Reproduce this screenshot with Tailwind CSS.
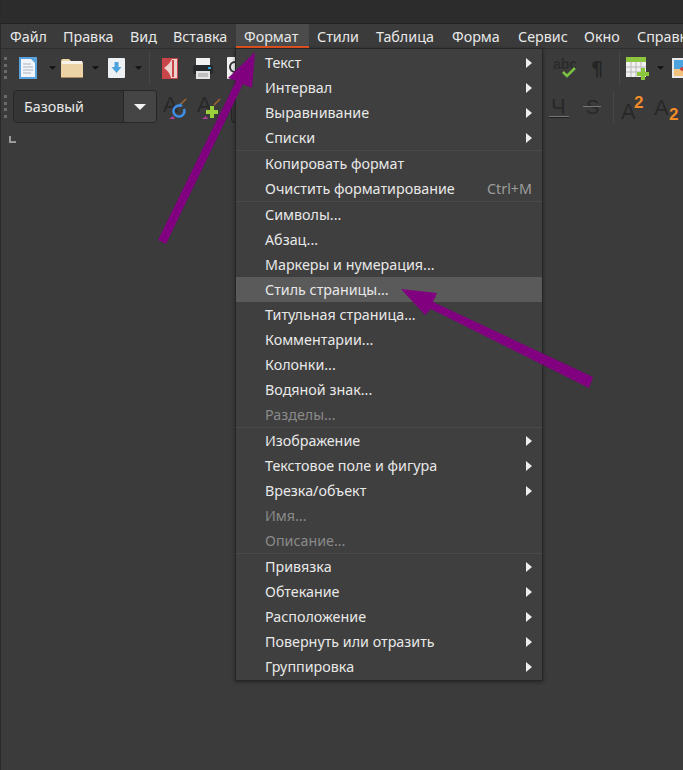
<!DOCTYPE html>
<html lang="ru">
<head>
  <meta charset="UTF-8" />
  <title>Формат</title>
  <script src="https://cdn.jsdelivr.net/npm/@tailwindcss/browser@4"></script>
</head>
<body class="bg-[#3b3b3b] font-['Noto_Sans',sans-serif] text-[14.3px] text-[#e8e8e8]">
<div class="relative w-[683px] h-[770px] overflow-hidden border-l border-[#2a2a2a]">

  <!-- title bar -->
  <div class="h-[23px] bg-[#2c2c2c] border-b border-[#222222] box-content"></div>

  <!-- menu bar -->
  <div class="flex h-[24px] pl-px border-b border-[#2e2e2e] box-content whitespace-nowrap *:shrink-0">
    <div class="w-[53px] pl-2 leading-[25px]">Файл</div>
    <div class="w-[67px] pl-2 leading-[25px]">Правка</div>
    <div class="w-[43px] pl-2 leading-[25px]">Вид</div>
    <div class="w-[71px] pl-2 leading-[25px]">Вставка</div>
    <div class="w-[73px] pl-2 leading-[25px] h-[24px] bg-[#4b4b4b] border-b-2 border-[#e95420]">Формат</div>
    <div class="w-[59px] pl-2 leading-[25px]">Стили</div>
    <div class="w-[76px] pl-2 leading-[25px]">Таблица</div>
    <div class="w-[66px] pl-2 leading-[25px]">Форма</div>
    <div class="w-[66px] pl-2 leading-[25px]">Сервис</div>
    <div class="w-[53px] pl-2 leading-[25px]">Окно</div>
    <div class="w-[60px] pl-2 leading-[25px]">Справка</div>
  </div>

  <!-- toolbar 1 -->
  <div class="flex items-center h-[38px] pl-[3px] *:shrink-0">
    <div class="w-[4px] h-[22px] border-l-[3px] border-dotted border-[#6a6a6a]"></div>
    <svg class="ml-[11px] w-[18px] h-[22px]" viewBox="0 0 18 22"><rect width="18" height="22" fill="#5aa2dc"/><path d="M2 2h10l4 4v14H2z" fill="#f1f5f9"/><path d="M4 7h8M4 10h10M4 13h10M4 16h8" stroke="#a9b4bf"/></svg>
    <svg class="ml-[12px] w-[7px] h-[4px]" viewBox="0 0 8 4"><path d="M0 0h8L4 4z" fill="#111"/></svg>
    <svg class="ml-[5px] w-[22px] h-[19px]" viewBox="0 0 22 19"><path d="M0 2q0-2 2-2h6l2 2h10q2 0 2 2v14q0 1-1 1H1q-1 0-1-1z" fill="#ecd3a5"/><path d="M1 2h20v3H1z" fill="#f7f3ea"/><path d="M0 18.500h22" stroke="#a88d63"/></svg>
    <svg class="ml-[9px] w-[7px] h-[4px]" viewBox="0 0 8 4"><path d="M0 0h8L4 4z" fill="#111"/></svg>
    <svg class="ml-[9px] w-[17px] h-[20px]" viewBox="0 0 17 20"><rect width="17" height="20" rx="1" fill="#eef1f3"/><path d="M6.500 4h4v5h3l-5 6-5-6h3z" fill="#4aa3df"/></svg>
    <svg class="ml-[10px] w-[7px] h-[4px]" viewBox="0 0 8 4"><path d="M0 0h8L4 4z" fill="#111"/></svg>
    <div class="ml-[7px] w-px h-[32px] bg-[#474747]"></div>
    <svg class="ml-[12px] w-[16px] h-[21px]" viewBox="0 0 16 21"><rect width="16" height="21" fill="#c9454a"/><path d="M10 1C8 5 5 8 2 10c3 2 6 5 7 10h6V1z" fill="#ecd2cf"/><path d="M11 2v17" stroke="#c9454a" stroke-width="2"/></svg>
    <svg class="ml-[15px] w-[20px] h-[21px]" viewBox="0 0 20 21"><rect x="3" y="0" width="14" height="7" fill="#f2f2f2"/><rect x="0" y="7" width="20" height="9" rx="2" fill="#26292b"/><rect x="15" y="9" width="3" height="2" fill="#2aa7d8"/><rect x="3" y="13" width="14" height="8" fill="#e4e4e4"/><path d="M5 16h10M5 18h10" stroke="#999"/></svg>
    <svg class="ml-[14px] w-[12px] h-[22px]" viewBox="0 0 12 22"><rect width="12" height="22" rx="1" fill="#f1f1f1"/><circle cx="8" cy="10" r="5" fill="none" stroke="#333" stroke-width="2"/></svg>
    <svg class="ml-[314px] w-[25px] h-[20px] overflow-visible" viewBox="0 0 25 20"><text x="0" y="11" font-family="Liberation Sans" font-size="14" font-weight="bold" fill="#2b2b2b">abc</text><path d="M10 14l4 4 8-8" fill="none" stroke="#7ac143" stroke-width="2.500"/></svg>
    <svg class="ml-[14px] w-[13px] h-[20px] overflow-visible" viewBox="0 0 13 20"><text x="-1" y="17" font-family="DejaVu Sans" font-size="19" font-weight="bold" fill="#262626">¶</text></svg>
    <div class="ml-[14px] w-px h-[32px] bg-[#474747]"></div>
    <svg class="ml-[6px] w-[24px] h-[23px]" viewBox="0 0 24 23"><rect width="20" height="20" fill="#f0f0f0"/><rect width="20" height="5" fill="#8cc63f"/><path d="M0 10h20M0 15h20M5 5v15M10 5v15M15 5v15" stroke="#b8b8b8"/><path d="M15 11h4v4h4v4h-4v4h-4v-4h-4v-4h4z" fill="#8cc63f"/></svg>
    <svg class="ml-[7px] w-[7px] h-[4px]" viewBox="0 0 8 4"><path d="M0 0h8L4 4z" fill="#111"/></svg>
    <svg class="ml-[8px] w-[20px] h-[20px]" viewBox="0 0 20 20"><rect width="20" height="20" fill="#e9e9e9"/><rect x="2" y="2" width="16" height="16" fill="#4aa3df"/><rect x="2" y="11" width="16" height="7" fill="#f1c27d"/><path d="M8 11h4M10 9v4" stroke="#d9332b" stroke-width="1.500"/></svg>
  </div>

  <!-- toolbar 2 -->
  <div class="flex items-center h-[39px] pl-[3px] *:shrink-0">
    <div class="w-[4px] h-[23px] border-l-[3px] border-dotted border-[#6a6a6a]"></div>
    <div class="ml-[5px] flex w-[144px] h-[33px] border border-[#262626] rounded-[4px] bg-[#353535] overflow-hidden">
      <div class="w-[109px] pl-[10px] leading-[31px]">Базовый</div>
      <div class="flex-1 bg-[#454545] border-l border-[#262626] flex items-center justify-center">
        <svg class="w-[12px] h-[6px]" viewBox="0 0 12 6"><path d="M0 0h12L6 6z" fill="#f2f2f2"/></svg>
      </div>
    </div>
    <svg class="ml-[6px] w-[24px] h-[26px] overflow-visible" viewBox="0 0 24 26"><text x="0" y="18" font-family="Liberation Sans" font-size="22" fill="#282828">A</text><path d="M18 10l5-5" stroke="#a5672c" stroke-width="1.500"/><path d="M21 15a5.500 5.500 0 1 1-3-3" fill="none" stroke="#3f8fe6" stroke-width="2.500"/><path d="M17 9l3 3-4 1z" fill="#3f8fe6"/><path d="M6 25l4-3 2 3z" fill="#b0409a"/></svg>
    <svg class="ml-[10px] w-[24px] h-[26px] overflow-visible" viewBox="0 0 24 26"><text x="0" y="18" font-family="Liberation Sans" font-size="22" fill="#282828">A</text><path d="M17 11l6-6" stroke="#a5672c" stroke-width="1.500"/><path d="M13 12h4v4h4v4h-4v4h-4v-4H9v-4h4z" fill="#9ad03b"/><path d="M5 25l4-3 2 3z" fill="#b0409a"/></svg>
    <div class="ml-[10px] w-[6px] h-[33px] border border-r-0 border-[#262626] rounded-l-[4px] bg-[#353535]"></div>
    <svg class="ml-[312px] w-[21px] h-[26px] overflow-visible" viewBox="0 0 21 26"><text x="2" y="19.500" font-family="Liberation Sans" font-size="22" fill="#282828">Ч</text><rect y="23" width="20" height="1" fill="#1f1f1f"/><rect y="22" width="20" height="1" fill="#777777"/></svg>
    <svg class="ml-[13px] w-[18px] h-[26px] overflow-visible" viewBox="0 0 18 26"><text x="3" y="20" font-family="Liberation Sans" font-size="20" fill="#282828">S</text><rect y="12" width="18" height="1" fill="#777777"/></svg>
    <div class="ml-[12px] w-px h-[32px] bg-[#474747]"></div>
    <svg class="ml-[7px] w-[24px] h-[28px] overflow-visible" viewBox="0 0 24 28"><text x="0" y="25.500" font-family="Liberation Sans" font-size="22" fill="#282828">A</text><text x="13" y="14.500" font-family="Liberation Sans" font-size="17" font-weight="bold" fill="#f28c28">2</text></svg>
    <svg class="ml-[9px] w-[26px] h-[28px] overflow-visible" viewBox="0 0 26 28"><text x="0" y="21.500" font-family="Liberation Sans" font-size="22" fill="#282828">A</text><text x="15" y="26.500" font-family="Liberation Sans" font-size="17" font-weight="bold" fill="#f28c28">2</text></svg>
  </div>

  <!-- corner marker -->
  <div class="ml-[8px] mt-[10px] w-[7px] h-[7px] border-l-2 border-b-2 border-[#9a9a9a]"></div>

  <!-- format menu -->
  <div class="absolute left-[234px] top-[48px] w-[308px] h-[633px] border border-[#262626] bg-[#3f3f3f] pt-px shadow-[0_1px_4px_rgba(0,0,0,0.4)] leading-[24px]">
    <div class="flex items-center justify-between h-[25px] pl-[29px] pr-[10px]"><span>Текст</span><svg class="w-[6px] h-[10px]" viewBox="0 0 6 10"><path d="M0 0l6 5-6 5z" fill="#eeeeee"/></svg></div>
    <div class="flex items-center justify-between h-[25px] pl-[29px] pr-[10px]"><span>Интервал</span><svg class="w-[6px] h-[10px]" viewBox="0 0 6 10"><path d="M0 0l6 5-6 5z" fill="#eeeeee"/></svg></div>
    <div class="flex items-center justify-between h-[25px] pl-[29px] pr-[10px]"><span>Выравнивание</span><svg class="w-[6px] h-[10px]" viewBox="0 0 6 10"><path d="M0 0l6 5-6 5z" fill="#eeeeee"/></svg></div>
    <div class="flex items-center justify-between h-[25px] pl-[29px] pr-[10px]"><span>Списки</span><svg class="w-[6px] h-[10px]" viewBox="0 0 6 10"><path d="M0 0l6 5-6 5z" fill="#eeeeee"/></svg></div>
    <div class="h-px bg-[#4a4a4a]"></div>
    <div class="flex items-center h-[25px] pl-[29px] pr-[10px]">Копировать формат</div>
    <div class="flex items-center justify-between h-[25px] pl-[29px] pr-[10px]"><span>Очистить форматирование</span><span class="text-[#9c9c9c]">Ctrl+M</span></div>
    <div class="h-px bg-[#4a4a4a]"></div>
    <div class="flex items-center h-[25px] pl-[29px]">Символы...</div>
    <div class="flex items-center h-[25px] pl-[29px]">Абзац...</div>
    <div class="flex items-center h-[25px] pl-[29px]">Маркеры и нумерация...</div>
    <div class="flex items-center h-[25px] pl-[29px] bg-[#5a5a5a]">Стиль страницы...</div>
    <div class="flex items-center h-[25px] pl-[29px]">Титульная страница...</div>
    <div class="flex items-center h-[25px] pl-[29px]">Комментарии...</div>
    <div class="flex items-center h-[25px] pl-[29px]">Колонки...</div>
    <div class="flex items-center h-[25px] pl-[29px]">Водяной знак...</div>
    <div class="flex items-center h-[25px] pl-[29px] text-[#8a8a8a]">Разделы...</div>
    <div class="h-px bg-[#4a4a4a]"></div>
    <div class="flex items-center justify-between h-[25px] pl-[29px] pr-[10px]"><span>Изображение</span><svg class="w-[6px] h-[10px]" viewBox="0 0 6 10"><path d="M0 0l6 5-6 5z" fill="#eeeeee"/></svg></div>
    <div class="flex items-center justify-between h-[25px] pl-[29px] pr-[10px]"><span>Текстовое поле и фигура</span><svg class="w-[6px] h-[10px]" viewBox="0 0 6 10"><path d="M0 0l6 5-6 5z" fill="#eeeeee"/></svg></div>
    <div class="flex items-center justify-between h-[25px] pl-[29px] pr-[10px]"><span>Врезка/объект</span><svg class="w-[6px] h-[10px]" viewBox="0 0 6 10"><path d="M0 0l6 5-6 5z" fill="#eeeeee"/></svg></div>
    <div class="flex items-center h-[25px] pl-[29px] text-[#8a8a8a]">Имя...</div>
    <div class="flex items-center h-[25px] pl-[29px] text-[#8a8a8a]">Описание...</div>
    <div class="h-px bg-[#4a4a4a]"></div>
    <div class="flex items-center justify-between h-[25px] pl-[29px] pr-[10px]"><span>Привязка</span><svg class="w-[6px] h-[10px]" viewBox="0 0 6 10"><path d="M0 0l6 5-6 5z" fill="#eeeeee"/></svg></div>
    <div class="flex items-center justify-between h-[25px] pl-[29px] pr-[10px]"><span>Обтекание</span><svg class="w-[6px] h-[10px]" viewBox="0 0 6 10"><path d="M0 0l6 5-6 5z" fill="#eeeeee"/></svg></div>
    <div class="flex items-center justify-between h-[25px] pl-[29px] pr-[10px]"><span>Расположение</span><svg class="w-[6px] h-[10px]" viewBox="0 0 6 10"><path d="M0 0l6 5-6 5z" fill="#eeeeee"/></svg></div>
    <div class="flex items-center justify-between h-[25px] pl-[29px] pr-[10px]"><span>Повернуть или отразить</span><svg class="w-[6px] h-[10px]" viewBox="0 0 6 10"><path d="M0 0l6 5-6 5z" fill="#eeeeee"/></svg></div>
    <div class="flex items-center justify-between h-[25px] pl-[29px] pr-[10px]"><span>Группировка</span><svg class="w-[6px] h-[10px]" viewBox="0 0 6 10"><path d="M0 0l6 5-6 5z" fill="#eeeeee"/></svg></div>
  </div>

  <!-- annotation arrows -->
  <svg class="absolute left-[-1px] top-0 w-[683px] h-[770px] pointer-events-none" viewBox="0 0 683 770">
    <polygon points="158,240 166,244 243,84 252,88 255,52 228,78 236,81" fill="#800080"/>
    <polygon points="593,377 589,388 431,309 425,315 401,289 437,293 433,302" fill="#800080"/>
  </svg>
</div>
</body>
</html>
